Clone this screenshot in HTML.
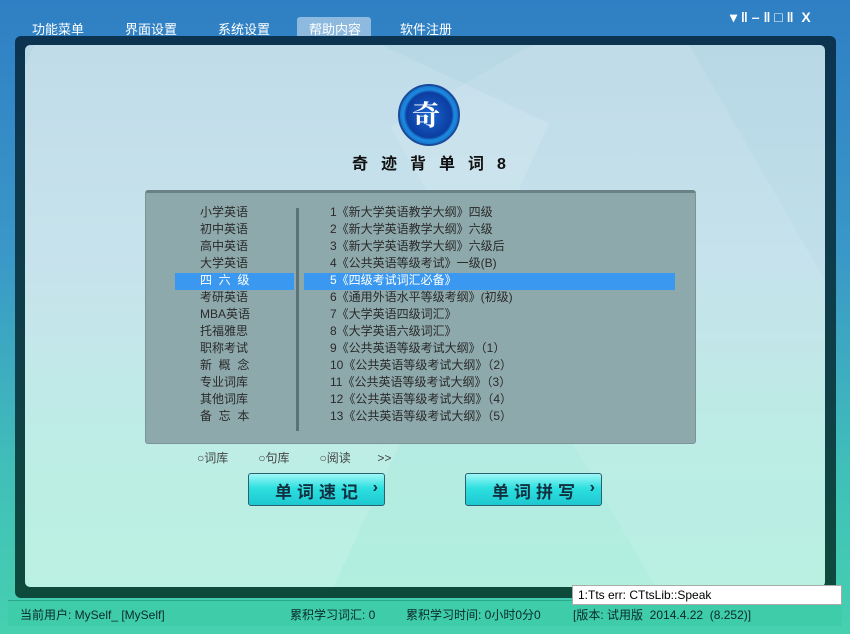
<!DOCTYPE html>
<html><head><meta charset="utf-8"><style>
*{margin:0;padding:0;box-sizing:border-box}
html,body{width:850px;height:634px;overflow:hidden}
body{font-family:"Liberation Sans","Noto Sans CJK SC",sans-serif;font-size:12px;position:relative;
background:linear-gradient(180deg,#2f7fc4 0%,#3a98c8 40%,#40c0b8 75%,#46d0b0 100%);}
.abs{position:absolute}
.menu span{position:absolute;top:19px;color:#fff;font-size:13px}
.tab{position:absolute;left:297px;top:17px;width:74px;height:24px;background:rgba(255,255,255,.45);border-radius:3px}
.frame{left:15px;top:36px;width:821px;height:562px;border-radius:6px;background:linear-gradient(180deg,#0c3450 0%,#0f3f48 60%,#0e4a3c 100%)}
.panel{left:25px;top:45px;width:800px;height:542px;border-radius:5px;background:linear-gradient(180deg,#b8d8e6 0%,#c0dfea 40%,#b4ebe2 75%,#b2efdf 100%);overflow:hidden}
.box{left:145px;top:190px;width:551px;height:254px;background:#8ea9ac;border:1px solid #7a9498;border-top:3px solid #6a8286;border-radius:3px}
.l{position:absolute;font-size:12px;color:#2a2a2a;line-height:17px;white-space:nowrap}
.sel{position:absolute;background:#3a98f0}
.btn{position:absolute;top:473px;width:137px;height:33px;border:1px solid #2a6070;border-radius:3px;background:linear-gradient(180deg,#9ff7f7 0%,#2ee0e0 45%,#1cc8d0 100%);font-size:17px;font-weight:bold;color:#103040;letter-spacing:5px;padding:4px 0 0 26px;white-space:nowrap}
.btn b{position:absolute;right:6px;top:5px;font-size:16px;letter-spacing:0}
.status{left:8px;top:600px;width:834px;height:26px;background:#3fcca8;border-top:1px solid #2aa888}
.status span{position:absolute;top:5px;font-size:12px;color:#0a2a2a;white-space:nowrap}
</style></head><body>
<div class="tab"></div>
<div class="menu"><span style="left:32px">功能菜单</span><span style="left:125px">界面设置</span><span style="left:218px">系统设置</span><span style="left:309px">帮助内容</span><span style="left:400px">软件注册</span></div>
<div class="abs" style="left:730px;top:9px;color:#fff;font-size:14px;font-weight:bold;white-space:nowrap">▾&nbsp;‖&nbsp;–&nbsp;‖&nbsp;□&nbsp;‖&nbsp;&nbsp;X</div>
<div class="abs frame"></div>
<div class="abs panel">
 <div class="abs" style="left:-100px;top:-60px;width:500px;height:700px;background:rgba(255,255,255,.12);transform:rotate(25deg)"></div>
 <div class="abs" style="left:520px;top:-40px;width:300px;height:700px;background:rgba(255,255,255,.1);transform:rotate(-30deg)"></div>
</div>
<div class="abs" style="left:398px;top:84px;width:62px;height:62px;border-radius:50%;background:radial-gradient(circle,#1a66d0 0%,#0c3da0 55%,#1c8be0 62%,#0b3a90 100%);border:2px solid #1a4a9a"></div>
<div class="abs" style="left:412px;top:94px;font-size:28px;color:#fff;font-weight:bold;font-family:'Noto Serif CJK SC',serif">奇</div>
<div class="abs" style="left:352px;top:150px;font-size:16px;color:#111;letter-spacing:13px;font-weight:bold;white-space:nowrap">奇迹背单词8</div>
<div class="abs box"></div>
<div class="sel" style="left:175px;top:273px;width:119px;height:17px"></div>
<div class="sel" style="left:304px;top:273px;width:371px;height:17px"></div>
<div class="abs" style="left:296px;top:208px;width:3px;height:223px;background:#5c7377"></div>
<div class="l" style="left:200px;top:204px">小学英语<br>初中英语<br>高中英语<br>大学英语<br><span style="color:#fff">四&nbsp;&nbsp;六&nbsp;&nbsp;级</span><br>考研英语<br>MBA英语<br>托福雅思<br>职称考试<br>新&nbsp;&nbsp;概&nbsp;&nbsp;念<br>专业词库<br>其他词库<br>备&nbsp;&nbsp;忘&nbsp;&nbsp;本</div>
<div class="l" style="left:330px;top:204px">1《新大学英语教学大纲》四级<br>2《新大学英语教学大纲》六级<br>3《新大学英语教学大纲》六级后<br>4《公共英语等级考试》一级(B)<br><span style="color:#fff">5《四级考试词汇必备》</span><br>6《通用外语水平等级考纲》(初级)<br>7《大学英语四级词汇》<br>8《大学英语六级词汇》<br>9《公共英语等级考试大纲》（1）<br>10《公共英语等级考试大纲》（2）<br>11《公共英语等级考试大纲》（3）<br>12《公共英语等级考试大纲》（4）<br>13《公共英语等级考试大纲》（5）</div>
<div class="l" style="left:197px;top:450px;color:#444">○词库&nbsp;&nbsp;&nbsp;&nbsp;&nbsp;&nbsp;&nbsp;&nbsp;&nbsp;○句库&nbsp;&nbsp;&nbsp;&nbsp;&nbsp;&nbsp;&nbsp;&nbsp;&nbsp;○阅读&nbsp;&nbsp;&nbsp;&nbsp;&nbsp;&nbsp;&nbsp;&nbsp;&gt;&gt;</div>
<div class="btn" style="left:248px">单词速记<b>›</b></div>
<div class="btn" style="left:465px">单词拼写<b>›</b></div>
<div class="abs status"><span style="left:12px">当前用户: MySelf_ [MySelf]</span><span style="left:282px">累积学习词汇: 0</span><span style="left:398px">累积学习时间: 0小时0分0</span><span style="left:565px">[版本: 试用版&nbsp;&nbsp;2014.4.22&nbsp;&nbsp;(8.252)]</span></div>
<div class="abs" style="left:572px;top:585px;width:270px;height:20px;background:#fff;border:1px solid #aaa;padding:2px 5px;font-size:12px;color:#000;white-space:nowrap">1:Tts err: CTtsLib::Speak</div>
</body></html>
